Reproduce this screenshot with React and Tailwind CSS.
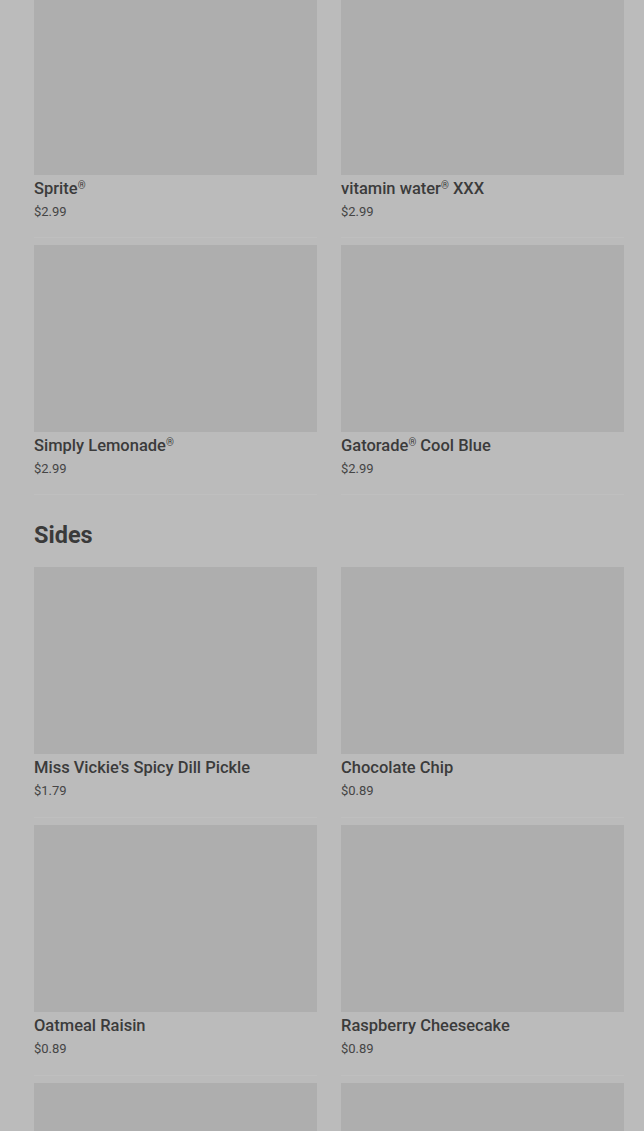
export default function App() {
  const Name = ({ name }) => {
    const parts = name.split("®");
    return (
      <>
        {parts.map((p, i) => (
          <span key={i}>
            {p}
            {i < parts.length - 1 && (
              <span className="relative -top-[5px] text-[10px] leading-none">®</span>
            )}
          </span>
        ))}
      </>
    );
  };
  const Card = ({ name, price, pb }) => (
    <div className={`flex flex-col border-b border-[#bfbfbf] ${pb}`}>
      <div className="h-[187px] w-full bg-[#aeaeae]" />
      <div className="mt-[4px] h-[20px] text-[16.5px] leading-[20px] font-medium text-[#3b3b3b]">
        <Name name={name} />
      </div>
      <div className="mt-[4px] h-[18px] text-[13px] leading-[18px] text-[#454545]">{price}</div>
    </div>
  );
  const drinks = [
    ["Sprite®", "$2.99"],
    ["vitamin water® XXX", "$2.99"],
    ["Simply Lemonade®", "$2.99"],
    ["Gatorade® Cool Blue", "$2.99"],
  ];
  const sides = [
    ["Miss Vickie's Spicy Dill Pickle", "$1.79"],
    ["Chocolate Chip", "$0.89"],
    ["Oatmeal Raisin", "$0.89"],
    ["Raspberry Cheesecake", "$0.89"],
    ["", ""],
    ["", ""],
  ];
  return (
    <div
      className="w-[644px] h-[1131px] overflow-hidden bg-[#bbbbbb]"
      style={{ fontFamily: "Roboto, 'Liberation Sans', sans-serif" }}
    >
      <div className="pl-[34px] pr-[20px] -mt-[12px]">
        <div className="grid grid-cols-2 gap-x-[24px] gap-y-[7px]">
          {drinks.map(([n, p], i) => (
            <Card key={i} name={n} price={p} pb="pb-[16px]" />
          ))}
        </div>
        <h2 className="mt-[26px] text-[23.5px] leading-[28px] font-bold text-[#3a3a3a]">Sides</h2>
        <div className="mt-[18px] grid grid-cols-2 gap-x-[24px] gap-y-[7px]">
          {sides.map(([n, p], i) => (
            <Card key={i} name={n} price={p} pb="pb-[17px]" />
          ))}
        </div>
      </div>
    </div>
  );
}
